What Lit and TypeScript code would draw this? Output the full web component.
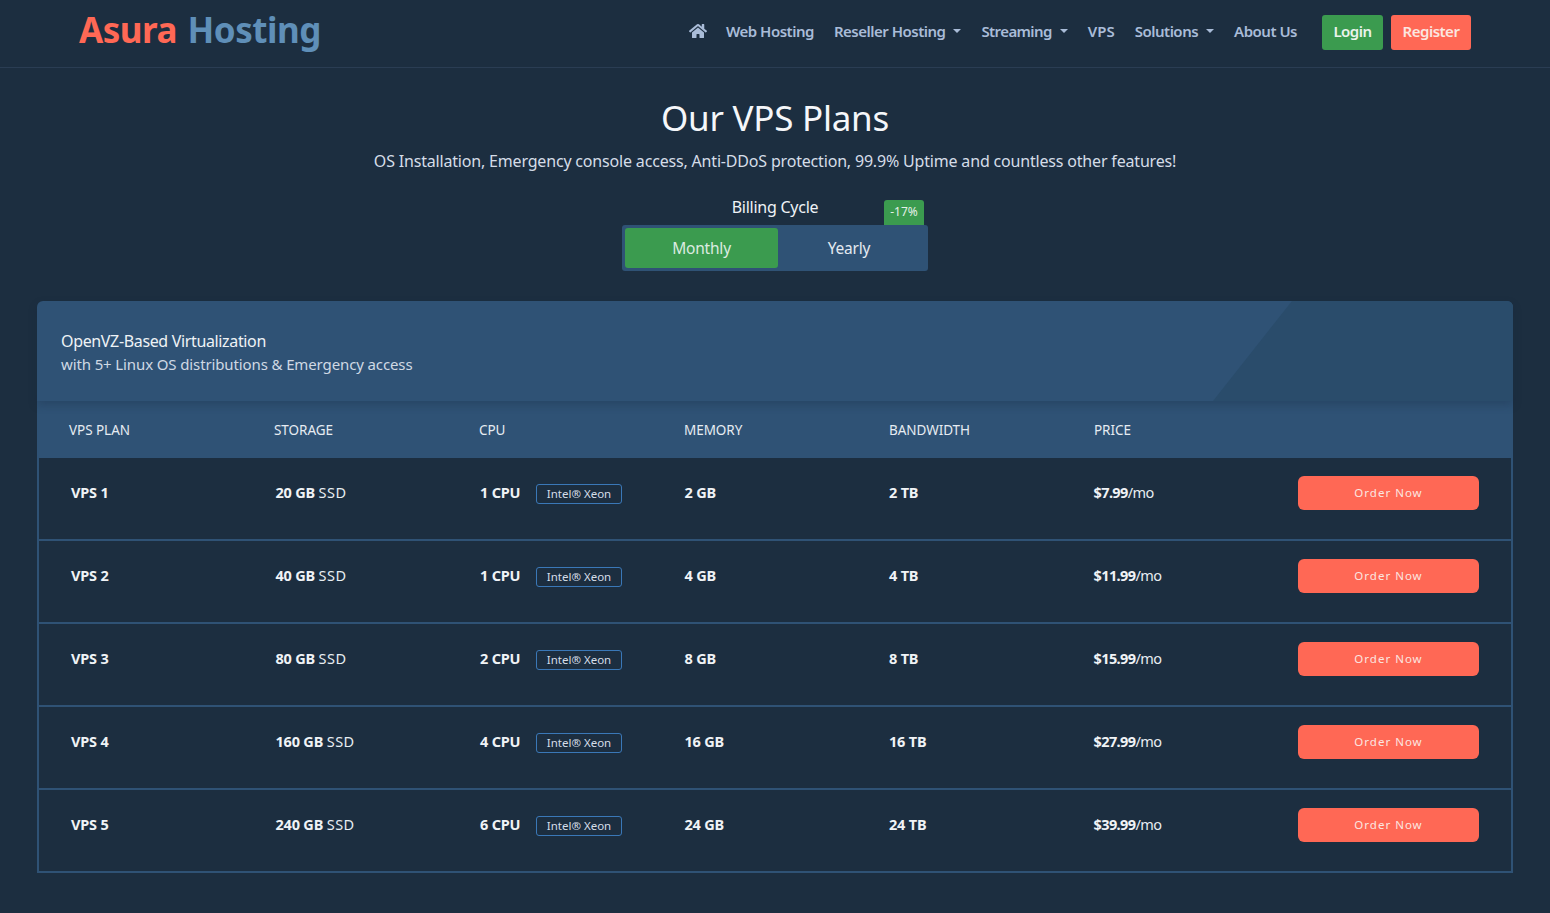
import { LitElement, html, css, svg } from "lit";
import { customElement } from "lit/decorators.js";

const home = svg`<path d="M280.37 148.26L96 300.11V464a16 16 0 0 0 16 16l112.06-.29a16 16 0 0 0 15.92-16V368a16 16 0 0 1 16-16h64a16 16 0 0 1 16 16v95.64a16 16 0 0 0 16 16.05L464 480a16 16 0 0 0 16-16V300L295.67 148.26a12.19 12.19 0 0 0-15.3 0zM571.6 251.47L488 182.56V44.05a12 12 0 0 0-12-12h-56a12 12 0 0 0-12 12v72.61L318.47 43a48 48 0 0 0-61 0L4.34 251.47a12 12 0 0 0-1.6 16.9l25.5 31A12 12 0 0 0 45.15 301l235.22-193.74a12.19 12.19 0 0 1 15.3 0L530.9 301a12 12 0 0 0 16.9-1.6l25.5-31a12 12 0 0 0-1.7-16.93z"/>`;

const plans = [
  { name: "VPS 1", storage: "20 GB", cpu: "1 CPU", mem: "2 GB", bw: "2 TB", price: "$7.99" },
  { name: "VPS 2", storage: "40 GB", cpu: "1 CPU", mem: "4 GB", bw: "4 TB", price: "$11.99" },
  { name: "VPS 3", storage: "80 GB", cpu: "2 CPU", mem: "8 GB", bw: "8 TB", price: "$15.99" },
  { name: "VPS 4", storage: "160 GB", cpu: "4 CPU", mem: "16 GB", bw: "16 TB", price: "$27.99" },
  { name: "VPS 5", storage: "240 GB", cpu: "6 CPU", mem: "24 GB", bw: "24 TB", price: "$39.99" },
];

@customElement("app-root")
export class AppRoot extends LitElement {
  static styles = css`
    :host {
      display: block;
      min-height: 100vh;
      background: #1c2e40;
      color: #f0f4f8;
      font-family: "Noto Sans", "Open Sans", sans-serif;
      font-size: 15px;
    }
    * { box-sizing: border-box; }

    .top {
      height: 68px;
      border-bottom: 1px solid #2a3d53;
      display: flex;
      align-items: center;
      justify-content: space-between;
      padding: 0 79px 3px 79px;
    }
    .logo { font-size: 35px; font-weight: 700; letter-spacing: -0.5px; word-spacing: 2px; line-height: 1; color: #5f8fb8; margin-top: -5px; }
    .logo span { color: #ff6855; }
    nav { display: flex; align-items: center; font-size: 15px; font-weight: 600; color: #a9bcd8; letter-spacing: -0.5px; }
    .nav-item { display: flex; align-items: center; margin-right: 20px; padding-bottom: 2px; }
    .nav-item.last { margin-right: 25px; }
    .tight { letter-spacing: -0.6px; }
    .loose { letter-spacing: 0; }
    .home { width: 18px; height: 16px; fill: #a9bcd8; display: block; margin-right: -1px; }
    .caret { width: 0; height: 0; margin-left: 8px; border-left: 4px solid transparent; border-right: 4px solid transparent; border-top: 4px solid #a9bcd8; }
    .btn { height: 35px; border-radius: 3px; color: #eaf3ec; display: flex; align-items: center; justify-content: center; padding-bottom: 2px; }
    .login { width: 61px; background: #3b9b4f; margin-right: 8px; }
    .register { width: 80px; background: #ff6855; color: #fbe6e0; }

    .hero { display: flex; flex-direction: column; align-items: center; }
    h1 { margin: 28px 0 0; font-size: 35px; line-height: 44px; font-weight: 400; color: #f5f7fa; letter-spacing: -0.25px; }
    .sub { margin: 10px 0 0; font-size: 16px; line-height: 22px; color: #d5dde8; letter-spacing: -0.18px; }
    .billing { position: relative; width: 306px; margin-top: 28px; display: flex; flex-direction: column; align-items: center; }
    .billing-label { font-size: 16px; line-height: 14px; height: 25px; color: #eef2f6; letter-spacing: -0.25px; }
    .badge { position: absolute; top: 0; right: 4px; width: 40px; height: 25px; background: #3b9b4f; border-radius: 3px 3px 0 0; font-size: 12px; padding-bottom: 2px; display: flex; align-items: center; justify-content: center; color: #e4f0e7; }
    .toggle { width: 306px; height: 46px; padding: 3px; background: #2f5275; border-radius: 3px; display: flex; font-size: 15.5px; letter-spacing: -0.2px; }
    .opt { display: flex; align-items: center; justify-content: center; flex: 1; color: #e4eaf1; padding-right: 5px; }
    .opt.on { flex: 0 0 153px; background: #3b9b4f; border-radius: 3px; color: #dcebe0; padding-right: 0; }

    .card { margin: 30px 37px 0; }
    .card-head {
      position: relative;
      z-index: 1;
      height: 100px;
      background: #2f5275;
      border-radius: 6px 6px 0 0;
      padding: 28px 24px 0;
      overflow: hidden;
      box-shadow: 0 4px 8px rgba(20, 40, 60, 0.28);
    }
    .card-head::after {
      content: "";
      position: absolute;
      inset: 0;
      background: #2a4c6b;
      clip-path: polygon(1255px 0, 100% 0, 100% 100%, 1176px 100%);
    }
    .title, .desc { position: relative; z-index: 1; }
    .title { font-size: 16px; line-height: 24px; color: #eef2f6; letter-spacing: -0.35px; }
    .desc { font-size: 15px; line-height: 22px; color: #cfd9e4; letter-spacing: -0.12px; }
    .grid { display: grid; align-items: center; }
    .thead { grid-template-columns: repeat(6, 205px) 1fr; height: 57px; background: #2f5275; padding: 0 32px; font-size: 13.5px; color: #e6ecf2; letter-spacing: -0.05px; }
    .rows { border: 2px solid #2f5275; border-top: 0; }
    .row { grid-template-columns: repeat(6, 204.5px) 181px; padding: 18px 32px 29px 32px; border-bottom: 2px solid #2f5275; font-size: 14.5px; color: #e8edf2; letter-spacing: -0.2px; }
    .row:last-child { border-bottom: 0; }
    .row > div { margin-bottom: 2px; }
    .row b { font-weight: 700; color: #f0f3f6; }
    .ssd { letter-spacing: 0.5px; }
    .price b { letter-spacing: -0.6px; }
    .price span { letter-spacing: -0.6px; }
    .cpu { display: flex; align-items: center; }
    .cpu b { width: 56px; flex: none; }
    .tag { width: 86px; height: 20px; margin-top: 4px; padding-bottom: 2px; border: 1px solid #3a78b8; border-radius: 3px; font-size: 11.5px; color: #d5dde8; letter-spacing: 0; display: flex; align-items: center; justify-content: center; }
    .row > .order { margin-bottom: 0; height: 34px; padding-bottom: 2px; background: #ff6855; border-radius: 6px; color: #fbe6e0; font-size: 11.5px; letter-spacing: 1px; display: flex; align-items: center; justify-content: center; }
  `;

  render() {
    return html`
      <header class="top">
        <div class="logo"><span>Asura</span> Hosting</div>
        <nav>
          <div class="nav-item"><svg class="home" viewBox="0 0 576 512">${home}</svg></div>
          <div class="nav-item">Web Hosting</div>
          <div class="nav-item">Reseller Hosting<i class="caret"></i></div>
          <div class="nav-item tight">Streaming<i class="caret"></i></div>
          <div class="nav-item loose">VPS</div>
          <div class="nav-item">Solutions<i class="caret"></i></div>
          <div class="nav-item last">About Us</div>
          <div class="btn login">Login</div>
          <div class="btn register">Register</div>
        </nav>
      </header>
      <section class="hero">
        <h1>Our VPS Plans</h1>
        <p class="sub">OS Installation, Emergency console access, Anti-DDoS protection, 99.9% Uptime and countless other features!</p>
        <div class="billing">
          <div class="billing-label">Billing Cycle</div>
          <div class="badge">-17%</div>
          <div class="toggle">
            <div class="opt on">Monthly</div>
            <div class="opt">Yearly</div>
          </div>
        </div>
      </section>
      <section class="card">
        <div class="card-head">
          <div class="title">OpenVZ-Based Virtualization</div>
          <div class="desc">with 5+ Linux OS distributions &amp; Emergency access</div>
        </div>
        <div class="grid thead">
          <div>VPS PLAN</div><div>STORAGE</div><div>CPU</div><div>MEMORY</div><div>BANDWIDTH</div><div>PRICE</div><div></div>
        </div>
        <div class="rows">
          ${plans.map(p => html`
            <div class="grid row">
              <div><b>${p.name}</b></div>
              <div><b>${p.storage}</b> <span class="ssd">SSD</span></div>
              <div class="cpu"><b>${p.cpu}</b><span class="tag">Intel® Xeon</span></div>
              <div><b>${p.mem}</b></div>
              <div><b>${p.bw}</b></div>
              <div class="price"><b>${p.price}</b><span>/mo</span></div>
              <div class="order">Order Now</div>
            </div>`)}
        </div>
      </section>
    `;
  }
}
